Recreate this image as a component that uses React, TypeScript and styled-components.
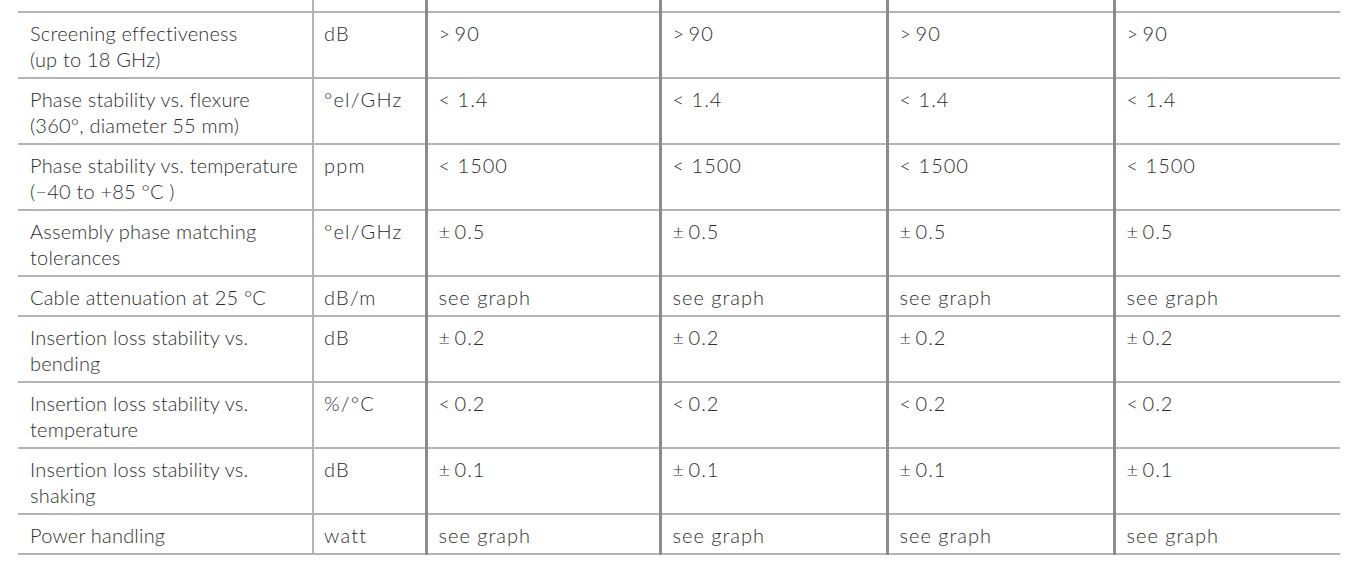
import React from 'react';
import styled, { createGlobalStyle } from 'styled-components';

type RowType = {
    label: string[]
    unit: string
    value: string
}

const rows: RowType[] = [
    { label: ['Screening effectiveness', '(up to 18 GHz)'], unit: 'dB', value: '>\u200990' },
    { label: ['Phase stability vs. flexure', '(360°, diameter 55 mm)'], unit: '°el/GHz', value: '< 1.4' },
    { label: ['Phase stability vs. temperature', '(−40 to +85 °C )'], unit: 'ppm', value: '< 1500' },
    { label: ['Assembly phase matching', 'tolerances'], unit: '°el/GHz', value: '±\u20090.5' },
    { label: ['Cable attenuation at 25 °C'], unit: 'dB/m', value: 'see graph' },
    { label: ['Insertion loss stability vs.', 'bending'], unit: 'dB', value: '±\u20090.2' },
    { label: ['Insertion loss stability vs.', 'temperature'], unit: '%/°C', value: '<\u20090.2' },
    { label: ['Insertion loss stability vs.', 'shaking'], unit: 'dB', value: '±\u20090.1' },
    { label: ['Power handling'], unit: 'watt', value: 'see graph' },
]

const GlobalStyle = createGlobalStyle`
  body {
    margin: 0;
    background: #ffffff;
    font-family: Lato, "Liberation Sans", sans-serif;
  }
`

export default function App() {
    return (
        <Page>
            <GlobalStyle/>
            <Table>
                <colgroup>
                    <col style={{ width: 295 }}/>
                    <col style={{ width: 113 }}/>
                    <col style={{ width: 234 }}/>
                    <col style={{ width: 227 }}/>
                    <col style={{ width: 227 }}/>
                    <col style={{ width: 226 }}/>
                </colgroup>
                <tbody>
                <TopRow>
                    <Label/>
                    <Unit/>
                    <Value/>
                    <Value/>
                    <Value/>
                    <Value/>
                </TopRow>
                {rows.map((row, i) => (
                    <Row key={i}>
                        <Label>{row.label.map((l, j) => <Line key={j}>{l}</Line>)}</Label>
                        <Unit>{row.unit}</Unit>
                        <Value>{row.value}</Value>
                        <Value>{row.value}</Value>
                        <Value>{row.value}</Value>
                        <Value>{row.value}</Value>
                    </Row>
                ))}
                </tbody>
            </Table>
        </Page>
    );
}

const Page = styled.div`
  padding: 0 0 0 18px;
  width: 1362px;
  box-sizing: border-box;
`

const Table = styled.table`
  width: 1322px;
  border-collapse: collapse;
  table-layout: fixed;
  color: #2e2e2e;
  font-size: 20px;
  font-weight: 300;
  line-height: 26px;
`

const Row = styled.tr`
  border-bottom: 2px solid #b4b4b4;
`

const TopRow = styled(Row)`
  height: 12px;
  td { padding: 0; }
`

const Cell = styled.td`
  vertical-align: top;
  padding: 7px 10px 5px 11px;
  white-space: nowrap;
`

const Label = styled(Cell)`
  padding-left: 12px;
  letter-spacing: 0.2px;
  border-right: 2px solid #b4b4b4;
`

const Unit = styled(Cell)`
  padding-left: 10px;
  letter-spacing: 1.2px;
  border-right: 3px solid #8c8c8c;
`

const Value = styled(Cell)`
  letter-spacing: 1px;
  border-right: 3px solid #8c8c8c;
  &:last-child {
    border-right: none;
  }
`

const Line = styled.div``
